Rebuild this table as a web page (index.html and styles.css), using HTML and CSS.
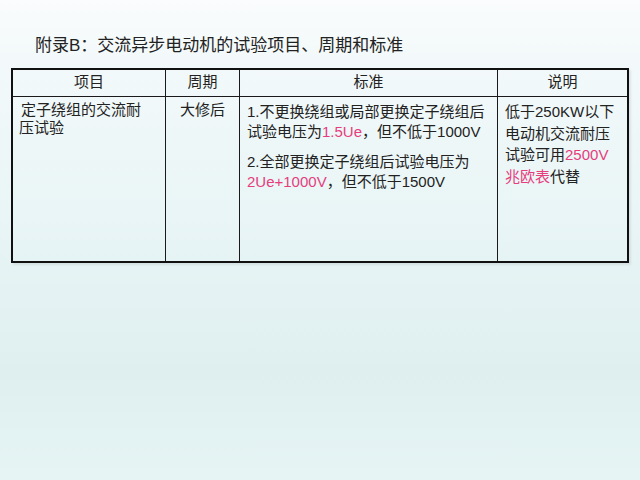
FILE: index.html
```html
<!DOCTYPE html>
<html lang="zh-CN">
<head>
<meta charset="utf-8">
<link rel="stylesheet" href="styles.css">
</head>
<body>
<div class="page">
  <h1 class="title">附录B：交流异步电动机的试验项目、周期和标准</h1>
  <div class="table">
    <div class="cell head">项目</div>
    <div class="cell head">周期</div>
    <div class="cell head">标准</div>
    <div class="cell head last">说明</div>
    <div class="cell body c1"><span class="indent">定子绕组的交流耐</span><br>压试验</div>
    <div class="cell body c2">大修后</div>
    <div class="cell body c3">
      <p class="para">1.不更换绕组或局部更换定子绕组后<br>试验电压为<span class="hl">1.5Ue</span>，但不低于1000V</p>
      <p class="para">2.全部更换定子绕组后试验电压为<br><span class="hl">2Ue+1000V</span>，但不低于1500V</p>
    </div>
    <div class="cell body c4 last">低于250KW以下<br>电动机交流耐压<br>试验可用<span class="hl">2500V<br>兆欧表</span>代替</div>
  </div>
</div>
</body>
</html>
```

FILE: styles.css
```css
html, body {
  margin: 0;
  padding: 0;
}
body {
  width: 640px;
  height: 480px;
  overflow: hidden;
  background: linear-gradient(to bottom, #fafcfd 0%, #f3f9fa 12%, #e9f5f6 45%, #dfefef 78%, #e6f4f4 100%);
  font-family: "Liberation Sans", "Noto Sans CJK SC", sans-serif;
  color: #222;
}
.page {
  padding: 34px 0 0 11px;
}
.title {
  margin: 0 0 10px 24px;
  font-size: 17px;
  font-weight: normal;
  line-height: 24px;
  color: #222;
}
.table {
  display: grid;
  grid-template-columns: 153px 74px 258px 1fr;
  grid-template-rows: 27px 164px;
  width: 614px;
  border: 2px solid #111;
  box-shadow: 2px 2px 2px rgba(0, 0, 0, 0.08);
}
.cell {
  border-right: 1px solid #1a1a1a;
  font-size: 15px;
  white-space: nowrap;
}
.cell.last {
  border-right: none;
}
.head {
  border-bottom: 1px solid #1a1a1a;
  text-align: center;
  line-height: 20px;
  padding-top: 2px;
}
.body {
  padding: 5px 7px 0 7px;
}
.c1 {
  padding-left: 6px;
  line-height: 18px;
  padding-top: 4px;
}
.indent {
  padding-left: 2px;
}
.c2 {
  text-align: center;
  line-height: 18px;
  padding-top: 4px;
}
.c3 {
  line-height: 20px;
  padding-top: 5px;
}
.para {
  margin: 0 0 10px 0;
}
.c4 {
  line-height: 21.5px;
  padding-top: 4px;
}
.hl {
  color: #e63d7d;
}
```
